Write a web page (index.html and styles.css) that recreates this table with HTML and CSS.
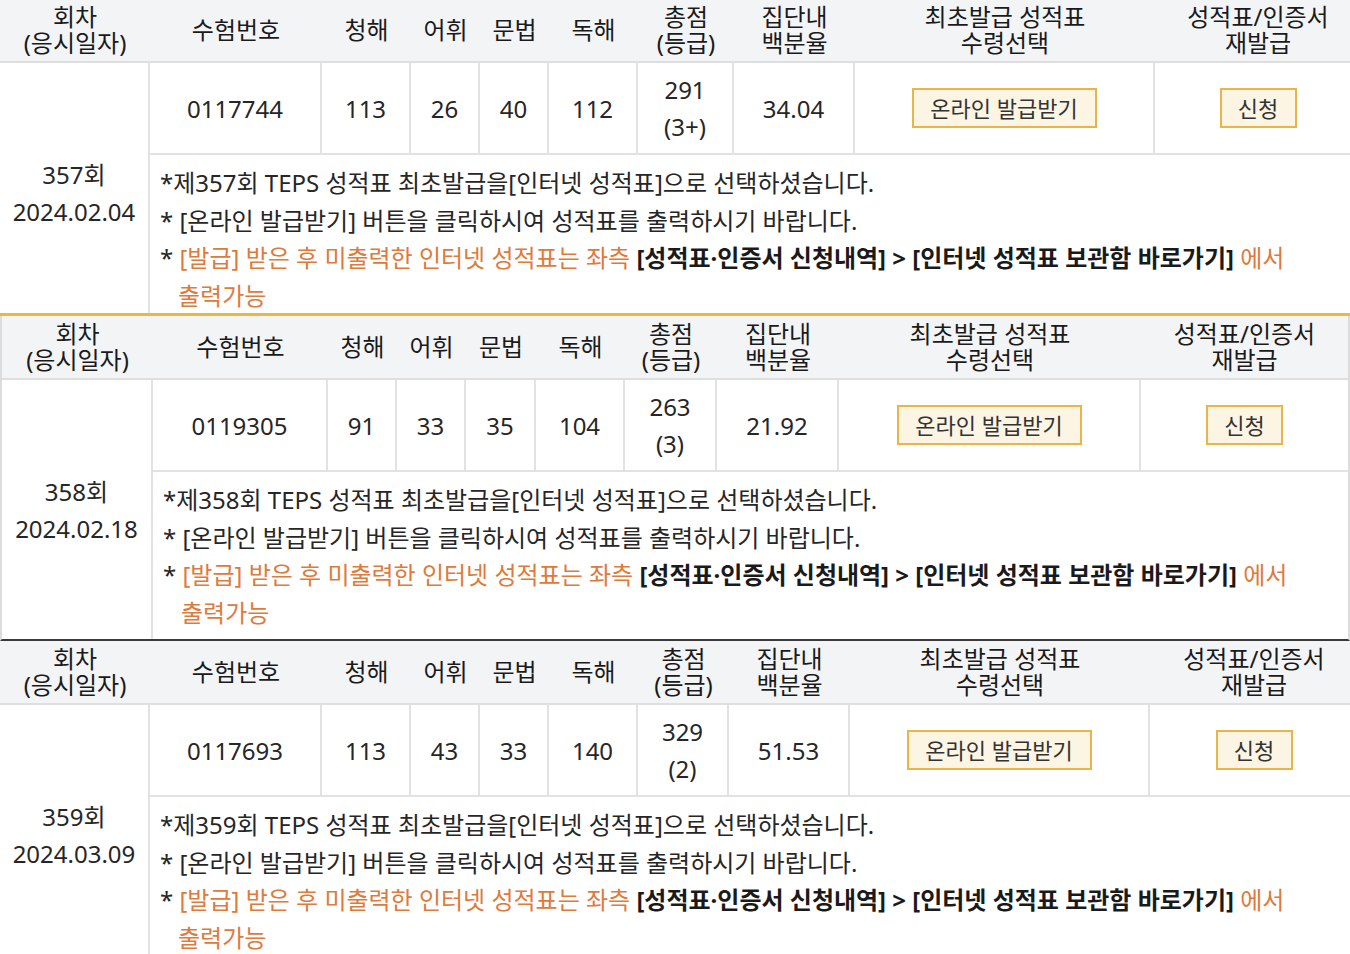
FILE: index.html
```html
<!DOCTYPE html>
<html lang="ko">
<head>
<meta charset="utf-8">
<title>TEPS 성적 조회</title>
<link rel="stylesheet" href="styles.css">
</head>
<body>
<div class="stack">

  <section class="sheet sheet-1">
    <table class="score t1">
      <colgroup>
        <col class="c1"><col class="c2"><col class="c3"><col class="c4"><col class="c5">
        <col class="c6"><col class="c7"><col class="c8"><col class="c9"><col class="c10">
      </colgroup>
      <thead>
        <tr>
          <th>회차<br>(응시일자)</th><th>수험번호</th><th>청해</th><th>어휘</th><th>문법</th>
          <th>독해</th><th>총점<br>(등급)</th><th>집단내<br>백분율</th><th>최초발급 성적표<br>수령선택</th><th>성적표/인증서<br>재발급</th>
        </tr>
      </thead>
      <tbody>
        <tr class="data">
          <td rowspan="2" class="round">357회<br>2024.02.04</td>
          <td>0117744</td><td>113</td><td>26</td><td>40</td><td>112</td>
          <td class="total">291<br>(3+)</td><td>34.04</td>
          <td><button class="btn btn-wide">온라인 발급받기</button></td>
          <td class="last"><button class="btn btn-small">신청</button></td>
        </tr>
        <tr>
          <td colspan="9" class="notes">
            <p>*제357회 TEPS 성적표 최초발급을[인터넷 성적표]으로 선택하셨습니다.</p>
            <p>* [온라인 발급받기] 버튼을 클릭하시여 성적표를 출력하시기 바랍니다.</p>
            <p class="hang">* <span class="warn">[발급] 받은 후 미출력한 인터넷 성적표는 좌측</span> <b>[성적표·인증서 신청내역] &gt; [인터넷 성적표 보관함 바로가기]</b> <span class="warn">에서 출력가능</span></p>
          </td>
        </tr>
      </tbody>
    </table>
  </section>

  <section class="sheet sheet-2">
    <table class="score t2">
      <colgroup>
        <col class="c1"><col class="c2"><col class="c3"><col class="c4"><col class="c5">
        <col class="c6"><col class="c7"><col class="c8"><col class="c9"><col class="c10">
      </colgroup>
      <thead>
        <tr>
          <th>회차<br>(응시일자)</th><th>수험번호</th><th>청해</th><th>어휘</th><th>문법</th>
          <th>독해</th><th>총점<br>(등급)</th><th>집단내<br>백분율</th><th>최초발급 성적표<br>수령선택</th><th>성적표/인증서<br>재발급</th>
        </tr>
      </thead>
      <tbody>
        <tr class="data">
          <td rowspan="2" class="round">358회<br>2024.02.18</td>
          <td>0119305</td><td>91</td><td>33</td><td>35</td><td>104</td>
          <td class="total">263<br>(3)</td><td>21.92</td>
          <td><button class="btn btn-wide">온라인 발급받기</button></td>
          <td class="last"><button class="btn btn-small">신청</button></td>
        </tr>
        <tr>
          <td colspan="9" class="notes">
            <p>*제358회 TEPS 성적표 최초발급을[인터넷 성적표]으로 선택하셨습니다.</p>
            <p>* [온라인 발급받기] 버튼을 클릭하시여 성적표를 출력하시기 바랍니다.</p>
            <p class="hang">* <span class="warn">[발급] 받은 후 미출력한 인터넷 성적표는 좌측</span> <b>[성적표·인증서 신청내역] &gt; [인터넷 성적표 보관함 바로가기]</b> <span class="warn">에서 출력가능</span></p>
          </td>
        </tr>
      </tbody>
    </table>
  </section>

  <section class="sheet sheet-3">
    <table class="score t3">
      <colgroup>
        <col class="c1"><col class="c2"><col class="c3"><col class="c4"><col class="c5">
        <col class="c6"><col class="c7"><col class="c8"><col class="c9"><col class="c10">
      </colgroup>
      <thead>
        <tr>
          <th>회차<br>(응시일자)</th><th>수험번호</th><th>청해</th><th>어휘</th><th>문법</th>
          <th>독해</th><th>총점<br>(등급)</th><th>집단내<br>백분율</th><th>최초발급 성적표<br>수령선택</th><th>성적표/인증서<br>재발급</th>
        </tr>
      </thead>
      <tbody>
        <tr class="data">
          <td rowspan="2" class="round">359회<br>2024.03.09</td>
          <td>0117693</td><td>113</td><td>43</td><td>33</td><td>140</td>
          <td class="total">329<br>(2)</td><td>51.53</td>
          <td><button class="btn btn-wide">온라인 발급받기</button></td>
          <td class="last"><button class="btn btn-small">신청</button></td>
        </tr>
        <tr>
          <td colspan="9" class="notes">
            <p>*제359회 TEPS 성적표 최초발급을[인터넷 성적표]으로 선택하셨습니다.</p>
            <p>* [온라인 발급받기] 버튼을 클릭하시여 성적표를 출력하시기 바랍니다.</p>
            <p class="hang">* <span class="warn">[발급] 받은 후 미출력한 인터넷 성적표는 좌측</span> <b>[성적표·인증서 신청내역] &gt; [인터넷 성적표 보관함 바로가기]</b> <span class="warn">에서 출력가능</span></p>
          </td>
        </tr>
      </tbody>
    </table>
  </section>

</div>
</body>
</html>
```

FILE: styles.css
```css
html, body {
  margin: 0;
  padding: 0;
  background: #ffffff;
  overflow: hidden;
}

body {
  font-family: "Noto Sans", "Noto Sans CJK KR", sans-serif;
  font-size: 24px;
  color: #262626;
  width: 1350px;
  height: 954px;
}

.stack {
  display: flex;
  flex-direction: column;
  width: 1350px;
}

.sheet {
  overflow: hidden;
  flex: none;
}

.sheet-1 {
  height: 313px;
  border-bottom: 3px solid #e8b93f;
}

.sheet-2 {
  height: 323px;
  width: 1346px;
  border-left: 2px solid #dcdcdc;
  border-right: 2px solid #dcdcdc;
  border-bottom: 2px solid #3a3a3a;
}

.sheet-3 {
  height: 320px;
}

.score {
  border-collapse: separate;
  border-spacing: 0;
  table-layout: fixed;
}

.t1 { width: 1361px; margin-top: -1px; }
.t2 { width: 1346px; }
.t3 { width: 1358px; }

.t1 .c1 { width: 150px; }  .t1 .c2 { width: 172px; } .t1 .c3 { width: 89px; }
.t1 .c4 { width: 69px; }   .t1 .c5 { width: 69px; }  .t1 .c6 { width: 89px; }
.t1 .c7 { width: 96px; }   .t1 .c8 { width: 121px; } .t1 .c9 { width: 300px; }
.t1 .c10 { width: 206px; }

.t2 .c1 { width: 151px; }  .t2 .c2 { width: 175px; } .t2 .c3 { width: 69px; }
.t2 .c4 { width: 69px; }   .t2 .c5 { width: 70px; }  .t2 .c6 { width: 89px; }
.t2 .c7 { width: 92px; }   .t2 .c8 { width: 122px; } .t2 .c9 { width: 302px; }
.t2 .c10 { width: 207px; }

.t3 .c1 { width: 150px; }  .t3 .c2 { width: 172px; } .t3 .c3 { width: 89px; }
.t3 .c4 { width: 69px; }   .t3 .c5 { width: 69px; }  .t3 .c6 { width: 89px; }
.t3 .c7 { width: 91px; }   .t3 .c8 { width: 121px; } .t3 .c9 { width: 300px; }
.t3 .c10 { width: 208px; }

.score th {
  height: 64px;
  box-sizing: border-box;
  padding: 0;
  background: #f3f4f6;
  color: #1a1a1a;
  font-weight: normal;
  line-height: 26px;
  text-align: center;
  vertical-align: middle;
  border-bottom: 2px solid #dfdfdf;
  white-space: nowrap;
}

.score td {
  padding: 0;
  text-align: center;
  vertical-align: middle;
  white-space: nowrap;
}

.data td {
  height: 92px;
  box-sizing: border-box;
  border-right: 2px solid #e2e2e2;
  border-bottom: 2px solid #e2e2e2;
  line-height: 37px;
}

.data td.last {
  border-right: none;
}

.data td.round {
  border-bottom: none;
  line-height: 37px;
}

.btn {
  font: inherit;
  font-size: 22px;
  color: #333333;
  background: #fcf5e4;
  border: 2px solid #e9b548;
  border-radius: 0;
  height: 40px;
  padding: 0;
  line-height: 36px;
  cursor: pointer;
}

.btn-wide { width: 185px; }
.btn-small { width: 77px; }

.score td.notes {
  text-align: left;
  white-space: normal;
  word-break: keep-all;
  padding: 9px 30px 8px 10px;
  line-height: 37.5px;
}

.notes p {
  margin: 0;
}

.notes p.hang {
  padding-left: 18px;
  text-indent: -18px;
}

.warn {
  color: #de7a3b;
}

.notes b {
  color: #1a1a1a;
  font-weight: bold;
}
```
